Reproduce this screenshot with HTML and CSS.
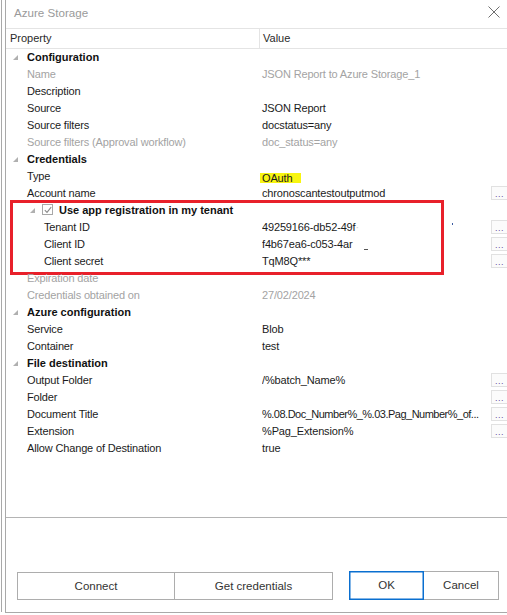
FILE: index.html
```html
<!DOCTYPE html>
<html>
<head>
<meta charset="utf-8">
<link rel="stylesheet" href="styles.css">
</head>
<body>
<div class="screen">
  <div class="backline"></div>
  <div class="dialog">
    <div class="titlebar">
      <span class="title">Azure Storage</span>
      <svg class="close" width="12" height="12" viewBox="0 0 12 12"><path d="M0.5 0.5 L11.5 11.5 M11.5 0.5 L0.5 11.5" stroke="#6f6f6f" stroke-width="1" fill="none"/></svg>
    </div>
    <div class="grid">
      <div class="ghead">
        <div class="hcell hprop">Property</div>
        <div class="hcell hval">Value</div>
      </div>
      <div class="gbody">
        <div class="row group"><div class="prop"><span class="tri"></span>Configuration</div><div class="val"></div></div>
        <div class="row dis"><div class="prop">Name</div><div class="val">JSON Report to Azure Storage_1</div></div>
        <div class="row"><div class="prop">Description</div><div class="val"></div></div>
        <div class="row"><div class="prop">Source</div><div class="val">JSON Report</div></div>
        <div class="row"><div class="prop">Source filters</div><div class="val">docstatus=any</div></div>
        <div class="row dis"><div class="prop">Source filters (Approval workflow)</div><div class="val">doc_status=any</div></div>
        <div class="row group"><div class="prop"><span class="tri"></span>Credentials</div><div class="val"></div></div>
        <div class="row"><div class="prop">Type</div><div class="val"><span class="mark">OAuth</span></div></div>
        <div class="row"><div class="prop">Account name</div><div class="val"><span class="vtext">chronoscantestoutputmod</span><span class="dots">...</span></div></div>
        <div class="hl-group">
          <div class="row sub"><div class="prop"><span class="tri small"></span><span class="chk"><svg width="8" height="8" viewBox="0 0 8 8"><path d="M0.8 4.2 L3 6.4 L7.2 1.2" stroke="#8a8a8a" stroke-width="1.1" fill="none"/></svg></span>Use app registration in my tenant</div><div class="val"></div></div>
          <div class="row child"><div class="prop">Tenant ID</div><div class="val"><span class="vtext">49259166-db52-49f<span class="faint">·</span><span class="speck"></span></span><span class="dots">...</span></div></div>
          <div class="row child"><div class="prop">Client ID</div><div class="val"><span class="vtext">f4b67ea6-c053-4ar<span class="dash"></span></span><span class="dots">...</span></div></div>
          <div class="row child"><div class="prop">Client secret</div><div class="val"><span class="vtext">TqM8Q***</span><span class="dots">...</span></div></div>
        </div>
        <div class="row dis"><div class="prop">Expiration date</div><div class="val"></div></div>
        <div class="row dis"><div class="prop">Credentials obtained on</div><div class="val">27/02/2024</div></div>
        <div class="row group"><div class="prop"><span class="tri"></span>Azure configuration</div><div class="val"></div></div>
        <div class="row"><div class="prop">Service</div><div class="val">Blob</div></div>
        <div class="row"><div class="prop">Container</div><div class="val">test</div></div>
        <div class="row group"><div class="prop"><span class="tri"></span>File destination</div><div class="val"></div></div>
        <div class="row"><div class="prop">Output Folder</div><div class="val"><span class="vtext">/%batch_Name%</span><span class="dots">...</span></div></div>
        <div class="row"><div class="prop">Folder</div><div class="val"><span class="vtext"></span><span class="dots">...</span></div></div>
        <div class="row"><div class="prop">Document Title</div><div class="val"><span class="vtext tight">%.08.Doc_Number%_%.03.Pag_Number%_of...</span><span class="dots">...</span></div></div>
        <div class="row"><div class="prop">Extension</div><div class="val"><span class="vtext">%Pag_Extension%</span><span class="dots">...</span></div></div>
        <div class="row"><div class="prop">Allow Change of Destination</div><div class="val">true</div></div>
      </div>
    </div>
    <div class="footer">
      <div class="btngroup left">
        <button class="btn wide">Connect</button>
        <button class="btn wide">Get credentials</button>
      </div>
      <div class="btngroup right">
        <button class="btn ok">OK</button>
        <button class="btn">Cancel</button>
      </div>
    </div>
  </div>
</div>
</body>
</html>
```

FILE: styles.css
```css
* { box-sizing: border-box; }
html, body { margin: 0; padding: 0; background: #ffffff; }
body {
  font-family: "Liberation Sans", Arial, sans-serif;
  font-size: 11px;
  color: #1b1b1b;
}
.screen {
  width: 507px;
  height: 615px;
  display: flex;
  overflow: hidden;
  padding-left: 1px;
  background: #fff;
}
.backline {
  width: 4px;
  flex: none;
  border-left: 1px solid #a9a9a9;
  height: 612px;
}
.dialog {
  flex: 1;
  min-width: 0;
  height: 613px;
  border-left: 1px solid #a9a9a9;
  border-bottom: 1px solid #a9a9a9;
  display: flex;
  flex-direction: column;
}
.titlebar {
  height: 28px;
  flex: none;
  display: flex;
  align-items: center;
  justify-content: space-between;
  padding: 0 7px 3px 8px;
}
.title {
  font-size: 11.6px;
  color: #9a9a9a;
}
.close { display: block; margin-top: -1px; }
.grid {
  height: 490px;
  flex: none;
  border-bottom: 1px solid #b4b4b4;
  display: flex;
  flex-direction: column;
  min-width: 0;
}
.ghead {
  height: 21px;
  display: flex;
  border-top: 1px solid #e4e4e4;
  border-bottom: 1px solid #e4e4e4;
  flex: none;
}
.hcell {
  display: flex;
  align-items: center;
  color: #2a2a2a;
  padding-bottom: 1px;
}
.hprop {
  width: 254px;
  padding-left: 4px;
  border-right: 1px solid #e4e4e4;
}
.hval { padding-left: 3px; }
.gbody { display: flex; flex-direction: column; min-width: 0; }
.row {
  height: 17px;
  display: flex;
  align-items: center;
  white-space: nowrap;
  padding-bottom: 2px;
  min-width: 0;
}
.prop {
  width: 254px;
  flex: none;
  padding-left: 21px;
  display: flex;
  align-items: center;
  position: relative;
  letter-spacing: -0.15px;
}
.val {
  flex: 1;
  min-width: 0;
  padding-left: 2px;
  display: flex;
  align-items: center;
  letter-spacing: -0.15px;
}
.dis .prop, .dis .val { color: #a3a3a3; }
.group .prop { font-weight: bold; color: #111; letter-spacing: 0; }
.tri {
  position: absolute;
  left: 7px;
  top: 4px;
  width: 0;
  height: 0;
  border-style: solid;
  border-width: 0 0 5px 5px;
  border-color: transparent transparent #b0b0b0 transparent;
}
.sub .prop { padding-left: 36px; font-weight: bold; color: #111; letter-spacing: 0; }
.sub .tri { left: 24px; }
.chk {
  width: 11px;
  height: 11px;
  border: 1px solid #a8a8a8;
  margin-right: 6px;
  display: flex;
  align-items: center;
  justify-content: center;
  background: #fff;
}
.chk svg { display: block; }
.child .prop { padding-left: 38px; }
.vtext {
  flex: 1;
  min-width: 0;
  overflow: hidden;
}
.tight { letter-spacing: -0.5px; padding-right: 4px; }
.dots {
  width: 16px;
  height: 14px;
  flex: none;
  border: 1px solid #e1e1e1;
  border-right: none;
  background: #fbfbfb;
  color: #6a4aa0;
  font-size: 9px;
  line-height: 14px;
  padding-left: 3px;
  letter-spacing: 0.5px;
  margin-top: 1px;
}
.mark {
  background: #f8f510;
  margin-left: -2px;
  padding: 0 9px 0 2px;
  line-height: 10px;
  display: inline-block;
  height: 10px;
  margin-top: 4px;
}
.faint { color: #cfcfcf; }
.dash {
  display: inline-block;
  width: 4px;
  height: 1px;
  background: #555;
  margin-left: 12px;
  vertical-align: -2px;
}
.speck {
  display: inline-block;
  width: 1px;
  height: 2px;
  background: #3a5aa0;
  margin-left: 93px;
  vertical-align: 6px;
}
.hl-group { position: relative; }
.hl-group::after {
  content: "";
  position: absolute;
  left: 4px;
  top: -2px;
  width: 428px;
  height: 69px;
  border: 3px solid #e8202a;
  pointer-events: none;
}
.footer {
  flex: 1;
  display: flex;
  align-items: flex-start;
  padding: 53px 8px 0 11px;
  gap: 16px;
}
.btngroup { display: flex; }
.btn {
  font-family: "Liberation Sans", Arial, sans-serif;
  font-size: 11.5px;
  color: #333;
  background: #fff;
  border: 1px solid #adadad;
  height: 28px;
  margin: 0;
  padding: 0;
}
.left { margin-top: 1px; }
.left .btn { height: 28px; }
.wide { width: 158px; }
.wide + .wide { border-left: none; }
.right .btn { width: 75px; height: 29px; padding-bottom: 2px; }
.right .btn + .btn { border-left: none; }
.btn.ok { border: 1px solid #0a6fd0; box-shadow: inset 0 0 0 0.5px #0a6fd0; }
```
